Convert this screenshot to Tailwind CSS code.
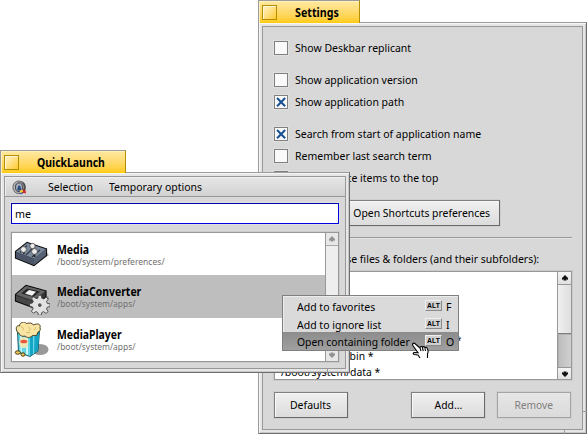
<!DOCTYPE html>
<html lang="en">
<head>
<meta charset="utf-8">
<title>QuickLaunch</title>
<script src="https://cdn.jsdelivr.net/npm/@tailwindcss/browser@4"></script>
</head>
<body class="relative w-[587px] h-[434px] overflow-hidden bg-white text-black text-[11.5px] leading-4 font-['Noto_Sans',sans-serif] whitespace-nowrap">

<!-- Settings window -->
<section class="absolute left-[258px] top-0 w-[329px] h-[434px] flex flex-col">
  <header class="relative z-10 w-[102px] h-[23px] shrink-0 flex items-center border border-b-0 border-[#9b9b9b] border-r-[#b58d00] bg-linear-to-b from-[#ffe9a0] to-[#ffcb00] pl-[3px] shadow-[inset_1px_1px_0_#fff1b8]">
    <span class="size-[15px] border border-[#b58d00] bg-linear-to-br from-[#fff3c4] to-[#ffcb05] shadow-[inset_1px_1px_0_#fff6d6]"></span>
    <h1 class="ml-[18px] pt-px font-bold origin-left scale-x-[.93]">Settings</h1>
  </header>
  <div class="-mt-px h-[412px] border border-[#9b9b9b] border-r-[#6e6e6e] border-b-[#6e6e6e] bg-[#e6e6e6] p-[3px] shadow-[inset_1px_1px_0_#f6f6f6,inset_-1px_-1px_0_#c8c8c8]">
    <div class="h-full border border-[#989898] bg-[#d8d8d8] pl-[11px] pt-[12px] flex flex-col">
      <label class="flex items-center gap-[7px] h-[18px]"><span class="size-[14px] mb-px border border-[#808080] bg-[#fafafa] shadow-[0_0_0_1px_#e0e0e0]"></span><span class="origin-left scale-x-[.913]">Show Deskbar replicant</span></label>
      <label class="mt-[14px] flex items-center gap-[7px] h-[18px]"><span class="size-[14px] mb-px border border-[#808080] bg-[#fafafa] shadow-[0_0_0_1px_#e0e0e0]"></span><span class="origin-left scale-x-[.913]">Show application version</span></label>
      <label class="mt-[4px] flex items-center gap-[7px] h-[18px]"><span class="size-[14px] mb-px border border-[#808080] bg-[#fafafa] shadow-[0_0_0_1px_#e0e0e0]"><svg class="size-[12px]" viewBox="0 0 12 12"><path d="M2.800 2.800l6.600 6.600M9.400 2.800l-6.600 6.600" stroke="#1b5295" stroke-width="2.100" stroke-linecap="square"/></svg></span><span class="origin-left scale-x-[.913]">Show application path</span></label>
      <label class="mt-[14px] flex items-center gap-[7px] h-[18px]"><span class="size-[14px] mb-px border border-[#808080] bg-[#fafafa] shadow-[0_0_0_1px_#e0e0e0]"><svg class="size-[12px]" viewBox="0 0 12 12"><path d="M2.800 2.800l6.600 6.600M9.400 2.800l-6.600 6.600" stroke="#1b5295" stroke-width="2.100" stroke-linecap="square"/></svg></span><span class="origin-left scale-x-[.913]">Search from start of application name</span></label>
      <label class="mt-[4px] flex items-center gap-[7px] h-[18px]"><span class="size-[14px] mb-px border border-[#808080] bg-[#fafafa] shadow-[0_0_0_1px_#e0e0e0]"></span><span class="origin-left scale-x-[.913]">Remember last search term</span></label>
      <label class="mt-[4px] flex items-center h-[18px]"><span class="size-[14px] mb-px border border-[#808080] bg-[#fafafa] shadow-[0_0_0_1px_#e0e0e0]"></span><span class="w-[150px] flex justify-end"><span class="origin-right scale-x-[.913]">Favorite items to the top</span></span></label>
      <button class="mt-[13px] ml-[70px] w-[156px] h-[26px] shrink-0 flex items-center justify-center border border-[#808080] border-b-[#686868] border-r-[#686868] bg-linear-to-b from-[#f0f0f0] to-[#dcdcdc] shadow-[inset_1px_1px_0_#f8f8f8,0_0_0_1px_#cecece]"><span class="scale-x-[.903]">Open Shortcuts preferences</span></button>
      <hr class="mt-[11px] w-[298px] shrink-0 border-0 border-t border-t-[#989898] h-[2px] bg-[#e6e6e6]">
      <p class="mt-[12px] w-[265px] flex justify-end"><span class="origin-right scale-x-[.913]">Ignore these files &amp; folders (and their subfolders):</span></p>
      <div class="mt-[4px] w-[298px] h-[109px] shrink-0 flex border border-[#989898] bg-white shadow-[0_0_0_1px_#cacaca]">
        <ul class="grow h-[107px] overflow-hidden pl-[6px] pt-[12px] leading-[16px]">
          <li class="origin-left scale-x-[.913]">/boot/home *</li>
          <li class="origin-left scale-x-[.913]">/boot/trash *</li>
          <li class="origin-left scale-x-[.913]">/boot/var *</li>
          <li class="w-[180px] flex justify-end"><span class="origin-right scale-x-[.913]">/boot/home/config/settings *</span></li>
          <li class="origin-left scale-x-[.9]">/boot/system/bin *</li>
          <li class="origin-left scale-x-[.905]">/boot/system/data *</li>
        </ul>
        <div class="w-[14px] border-l border-[#989898] flex flex-col bg-linear-to-r from-[#bcbcbc] to-[#d0d0d0]">
          <span class="h-[13px] flex items-center justify-center border-b border-[#989898] bg-linear-to-b from-[#f4f4f4] to-[#e0e0e0]"><svg class="size-[8px]" viewBox="0 0 8 8"><path d="M4 1L7 4v2L5.500 5v1.500h-3V5L1 6V4z" fill="#111"/></svg></span>
          <span class="h-[49px] border-b border-[#808080] bg-linear-to-r from-[#f0f0f0] to-[#dedede]"></span>
          <span class="h-[33px] shadow-[inset_1px_1px_0_#b0b0b0]"></span>
          <span class="h-[12px] flex items-center justify-center border-t border-[#989898] bg-linear-to-b from-[#f4f4f4] to-[#e0e0e0]"><svg class="size-[8px]" viewBox="0 0 8 8"><path d="M4 7L1 4V2l1.500 1V1.500h3V3L7 2v2z" fill="#111"/></svg></span>
        </div>
      </div>
      <div class="mt-[12px] flex h-[26px] shrink-0">
        <button class="w-[74px] flex items-center justify-center border border-[#808080] border-b-[#686868] border-r-[#686868] bg-linear-to-b from-[#f0f0f0] to-[#dcdcdc] shadow-[inset_1px_1px_0_#f8f8f8,0_0_0_1px_#cecece]"><span class="scale-x-[.913]">Defaults</span></button>
        <button class="ml-[63px] w-[74px] flex items-center justify-center border border-[#808080] border-b-[#686868] border-r-[#686868] bg-linear-to-b from-[#f0f0f0] to-[#dcdcdc] shadow-[inset_1px_1px_0_#f8f8f8,0_0_0_1px_#cecece]"><span class="scale-x-[.9]">Add...</span></button>
        <button class="ml-[12px] w-[74px] flex items-center justify-center border border-[#a4a4a4] bg-linear-to-b from-[#e6e6e6] to-[#dadada] text-[#808080] shadow-[0_0_0_1px_#d0d0d0]" disabled><span class="scale-x-[.89]">Remove</span></button>
      </div>
    </div>
  </div>
  <i class="absolute right-0 bottom-[22px] w-[4px] h-px bg-[#989898]"></i>
  <i class="absolute right-[22px] bottom-0 w-px h-[4px] bg-[#989898]"></i>
</section>

<!-- QuickLaunch window -->
<section class="absolute left-0 top-[150px] w-[350px] h-[223px] flex flex-col">
  <header class="relative z-10 w-[126px] h-[23px] shrink-0 flex items-center border border-b-0 border-[#9b9b9b] border-r-[#b58d00] bg-linear-to-b from-[#ffe9a0] to-[#ffcb00] pl-[3px] shadow-[inset_1px_1px_0_#fff1b8]">
    <span class="size-[15px] border border-[#b58d00] bg-linear-to-br from-[#fff3c4] to-[#ffcb05] shadow-[inset_1px_1px_0_#fff6d6]"></span>
    <h1 class="ml-[18px] pt-px font-bold origin-left scale-x-[.908]">QuickLaunch</h1>
  </header>
  <div class="-mt-px h-[201px] border border-[#9b9b9b] border-r-[#6e6e6e] border-b-[#6e6e6e] bg-[#e6e6e6] p-[3px] shadow-[inset_1px_1px_0_#f6f6f6,inset_-1px_-1px_0_#c8c8c8]">
    <div class="h-full border border-[#989898] bg-[#d8d8d8] flex flex-col">
      <nav class="h-[20px] shrink-0 flex items-center border-b border-[#989898] bg-linear-to-b from-[#e6e6e6] to-[#d2d2d2] shadow-[inset_1px_1px_0_#f0f0f0] pl-[7px]">
        <svg class="w-[16px] h-[16px] mt-[2px]" viewBox="0 0 16 16">
          <ellipse cx="9" cy="7.500" rx="4.800" ry="6.300" fill="#484848"/>
          <ellipse cx="6.500" cy="7.300" rx="5.600" ry="6.300" fill="#b4b4b4" stroke="#505050" stroke-width=".8"/>
          <ellipse cx="7" cy="7.300" rx="3.500" ry="4.400" fill="#a4b0c0" stroke="#3c3c46"/>
          <path d="M5.300 10.500c0-3 .7-5 1.900-5s1.900 2 1.900 5z" fill="#294b7a"/>
          <path d="M7.500 11l2.500-1 1.500 1.500-2.500 1.500z" fill="#ffd52a"/><path d="M11.200 9l2.300 1.500.5 3-3-.7z" fill="#d4202b"/><path d="M7.500 13l2.500-.3.500 1.300-2 .5z" fill="#5b6bc8"/>
        </svg>
        <span class="ml-[20px] w-[61px] pt-px origin-left scale-x-[.92]">Selection</span><span class="pt-px origin-left scale-x-[.91]">Temporary options</span>
      </nav>
      <div class="mt-[6px] ml-[6px] w-[328px] h-[21px] shrink-0 flex items-center border border-[#0000e5] border-t-[#0000b0] border-l-[#0000b0] bg-white pl-[3px] shadow-[0_0_0_1px_#e0e0e0]"><span class="pt-px origin-left scale-x-[.93]">me</span></div>
      <div class="mt-[8px] ml-[6px] w-[328px] h-[130px] shrink-0 flex border border-[#989898] bg-white shadow-[0_0_0_1px_#cacaca]">
        <div class="grow">
          <div class="h-[42px] flex items-center pl-[2px]">
            <svg class="size-[36px] shrink-0" viewBox="0 0 36 36">
              <path d="M18 31l17-12-2-2-13 11z" fill="#000" opacity=".35"/>
              <path d="M1.500 15.500L13 6.500 32.500 13v6.500L20 29.500 1.500 22z" fill="#3c4453" stroke="#111" stroke-width="1.200"/>
              <path d="M2 15.700L13 7l19 6.200L20 22.500z" fill="#7b899c"/><path d="M20 22.500V29l12-9.800v-6z" fill="#566174"/><path d="M2 16l18 6.700V29L2 21.800z" fill="#4a5466"/>
              <path d="M6 16.500l7-7M12 19l9-9M18 21l8-7" stroke="#303846" stroke-width="1.200"/>
              <path d="M10 15v3M19 11v5M20.500 18v3" stroke="#1c1c1c" stroke-width="1.600"/>
              <g fill="#eee" stroke="#444" stroke-width=".8"><circle cx="9.500" cy="13.500" r="2.900"/><circle cx="18.500" cy="10" r="2.700"/><circle cx="20.500" cy="15.500" r="2.900"/></g>
            </svg>
            <div class="ml-[7px] pt-[2px] leading-[12px]"><b class="block origin-left scale-x-[.91]">Media</b><span class="block h-[11px] leading-[11px] text-[9.5px] text-[#707070] origin-left scale-x-[.9]">/boot/system/preferences/</span></div>
          </div>
          <div class="h-[43px] flex items-center pl-[2px] bg-[#bebebe]">
            <svg class="size-[36px] shrink-0" viewBox="0 0 36 36">
              <path d="M18 30l16-13 1 3-12 11z" fill="#000" opacity=".3"/>
              <path d="M1.500 15.500L12 6.500 32 12v6L19 28.500 1.500 22z" fill="#343434" stroke="#0c0c0c" stroke-width="1.200"/>
              <path d="M2 15.500L12 7l19.500 5.300L19 21.500z" fill="#656565"/><path d="M2 17l17 5.500v5.500L2 21.500z" fill="#474747"/>
              <path d="M7 14.500L13 9.500l13 3-6.500 5.500z" fill="#292929"/><path d="M11 14.500L15 11l7 1.700-4 4z" fill="#f3f3f3"/>
              <g transform="translate(2.500 2.500) scale(.92)"><path d="M23.200 18.200l.5-3.200h3.200l.6 3.200 2.200.8 2.600-2 2.200 2.200-1.900 2.600.9 2 3 .5v3l-3 .6-.9 2 1.800 2.700-2.300 2.100-2.600-1.900-2 .8-.6 3h-3.200l-.6-3-2-.9-2.700 1.800-2.200-2.200 1.900-2.700-.8-2-3-.7v-2.900l3-.6.9-2-1.800-2.600 2.300-2.200 2.500 1.900z" fill="#e2e2e2" stroke="#3b3b3b" stroke-width=".9"/>
              <circle cx="25.300" cy="25.700" r="2.600" fill="#555" stroke="#fafafa"/></g>
            </svg>
            <div class="ml-[7px] pt-[2px] leading-[12px]"><b class="block origin-left scale-x-[.907]">MediaConverter</b><span class="block h-[11px] leading-[11px] text-[9.5px] text-[#707070] origin-left scale-x-[.89]">/boot/system/apps/</span></div>
          </div>
          <div class="h-[43px] flex items-center pl-[2px]">
            <svg class="size-[36px] shrink-0" viewBox="0 0 36 36">
              <ellipse cx="26" cy="27.500" rx="8.500" ry="5.500" fill="#000" opacity=".4"/>
              <path d="M3.500 9l12 3 10-3-1.500 20-8 5.500-11.500-4z" fill="#62d5e6" stroke="#155e70"/>
              <path d="M16 12l9.300-2.500-1.500 19L16 34z" fill="#14a5c6"/>
              <path d="M6 11l2 .5v19l-1.500-.5zM12 12h2v21l-2-.7z" fill="#c8f6fa"/><path d="M19 12l1.500-.5-.5 20-1 .5z" fill="#6fd8ea"/>
              <ellipse cx="9.800" cy="20.500" rx="4.500" ry="5.500" fill="#efe6b8"/><ellipse cx="9.800" cy="19.500" rx="3.500" ry="1.800" fill="#e8573c"/>
              <path d="M2.500 8c-1-3 1-5 3-4 0-4 5-5 7-2.500 3-1 6-.5 7 1.500 4-2 7.500-1 6.500 2.500 1 3-.5 4-2 4.500l-1 3c-2 1-4 0-5 1-2 2-5 2-7 0-3 1-6-1-6-3-1 0-2-1-2.500-3z" fill="#f9e5a4" stroke="#3f3110" stroke-width=".9"/>
              <path d="M7 5c2 0 3 1 2 3M14 5c2 1 3 2 1 4M21 5c1 1 1 2-1 3M12 10c1 1 3 1 4 0" fill="none" stroke="#d9b865"/>
              <ellipse cx="3.800" cy="30.500" rx="2.600" ry="1.700" fill="#f0cb58" stroke="#4d3b0c"/><ellipse cx="9" cy="32.500" rx="2" ry="1.700" fill="#f0cb58" stroke="#4d3b0c"/>
            </svg>
            <div class="ml-[7px] pt-[2px] leading-[12px]"><b class="block origin-left scale-x-[.907]">MediaPlayer</b><span class="block h-[11px] leading-[11px] text-[9.5px] text-[#707070] origin-left scale-x-[.89]">/boot/system/apps/</span></div>
          </div>
        </div>
        <div class="w-[13px] border-l border-[#989898] flex flex-col bg-[#eeeeee]">
          <span class="h-[13px] flex items-center justify-center border-b border-[#a8a8a8] bg-[#e8e8e8]"><svg class="size-[8px]" viewBox="0 0 8 8"><path d="M4 1L7 4v2L5.500 5v1.500h-3V5L1 6V4z" fill="#929292"/></svg></span>
          <span class="grow"></span>
          <span class="h-[13px] flex items-center justify-center bg-[#e8e8e8]"><svg class="size-[8px]" viewBox="0 0 8 8"><path d="M4 7L1 4V2l1.500 1V1.500h3V3L7 2v2z" fill="#929292"/></svg></span>
        </div>
      </div>
    </div>
  </div>
  <i class="absolute right-[22px] bottom-0 w-px h-[4px] bg-[#989898]"></i>
</section>

<!-- Context menu -->
<ul class="absolute left-[282px] top-[295px] w-[177px] h-[56px] border border-[#808080] bg-[#dadada] shadow-[inset_1px_1px_0_#ececec] flex flex-col">
  <li class="h-[18px] mt-[1px] pt-[2px] flex items-center pl-[14px]"><span class="w-[128px] origin-left scale-x-[.913]">Add to favorites</span><kbd class="w-[17px] h-[11px] mb-[3px] flex items-center justify-center border border-[#f0f0f0] border-r-[#8a8a8a] border-b-[#8a8a8a] bg-[#d0d0d0] font-bold font-['Liberation_Sans',sans-serif] text-[8px] leading-[9px]"><span class="scale-x-[.85]">ALT</span></kbd><span class="ml-[4px] origin-left scale-x-[.913]">F</span></li>
  <li class="h-[17px] pt-[2px] flex items-center pl-[14px]"><span class="w-[128px] origin-left scale-x-[.913]">Add to ignore list</span><kbd class="w-[17px] h-[11px] mb-[3px] flex items-center justify-center border border-[#f0f0f0] border-r-[#8a8a8a] border-b-[#8a8a8a] bg-[#d0d0d0] font-bold font-['Liberation_Sans',sans-serif] text-[8px] leading-[9px]"><span class="scale-x-[.85]">ALT</span></kbd><span class="ml-[4px] origin-left scale-x-[.913]">I</span></li>
  <li class="h-[18px] pt-[2px] flex items-center pl-[14px] bg-linear-to-b from-[#8c8c8c] to-[#a0a0a0]"><span class="w-[128px] origin-left scale-x-[.9]">Open containing folder</span><kbd class="w-[17px] h-[11px] mb-[3px] flex items-center justify-center border border-[#f0f0f0] border-r-[#8a8a8a] border-b-[#8a8a8a] bg-[#d0d0d0] font-bold font-['Liberation_Sans',sans-serif] text-[8px] leading-[9px]"><span class="scale-x-[.85]">ALT</span></kbd><span class="ml-[4px] origin-left scale-x-[.913]">O</span></li>
</ul>

<!-- Pointer -->
<svg class="absolute left-[412px] top-[342px] w-[18px] h-[17px]" viewBox="0 0 18 17"><path d="M1 1.500c1-1 2 0 3 1l4 3.500c0-2 2-2 2.500-.5.500-1.500 2-1 2.500.3.800-1 2-.5 2.300 1C16 8 16.500 10 15.500 12v4H8l-2-3-4-.5c-1.300-.5-1-2 .5-2l3.500.2-5-7C.5 3 .5 2 1 1.500z" fill="#fff"/><path d="M8 16l-2-3-4-.5c-1.300-.5-1-2 .5-2l3.500.2-5-7C.5 3 .5 2 1 1.500c1-1 2 0 3 1l4 3.500c0-2 2-2 2.500-.5.500-1.500 2-1 2.500.3.800-1 2-.5 2.300 1C16 8 16.500 10 15.500 12v4M8 6l1 3M10.500 6l.8 3M13 6.500l.5 2.500" fill="none" stroke="#000" stroke-width="1.100"/></svg>

</body>
</html>
